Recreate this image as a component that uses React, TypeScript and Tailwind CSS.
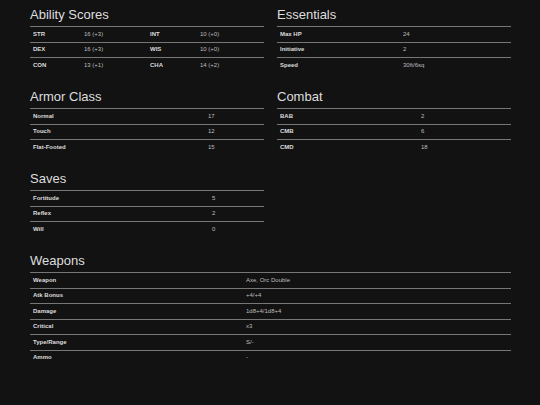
const abilities = [
  ['STR', '16 (+3)', 'INT', '10 (+0)'],
  ['DEX', '16 (+3)', 'WIS', '10 (+0)'],
  ['CON', '13 (+1)', 'CHA', '14 (+2)'],
];

const essentials = [
  ['Max HP', '24'],
  ['Initiative', '2'],
  ['Speed', '30ft/6sq'],
];

const armor = [
  ['Normal', '17'],
  ['Touch', '12'],
  ['Flat-Footed', '15'],
];

const combat = [
  ['BAB', '2'],
  ['CMB', '6'],
  ['CMD', '18'],
];

const saves = [
  ['Fortitude', '5'],
  ['Reflex', '2'],
  ['Will', '0'],
];

const weapons = [
  ['Weapon', 'Axe, Orc Double'],
  ['Atk Bonus', '+4/+4'],
  ['Damage', '1d8+4/1d8+4'],
  ['Critical', 'x3'],
  ['Type/Range', 'S/-'],
  ['Ammo', '-'],
];

const Heading = ({ title }: { title: string }) => (
  <h2 className="text-[13px] leading-[16px] mb-[3px] text-[#dedede] font-normal">{title}</h2>
);

// two-column key/value table, labelWidth = width of first column
const KeyValue = ({ title, rows, labelWidth }: { title: string; rows: string[][]; labelWidth: string }) => (
  <section>
    <Heading title={title} />
    <div>
      {rows.map(([label, value]) => (
        <div key={label} className={`grid ${labelWidth} items-center h-[15.5px] border-t border-[#767676] text-[6px]`}>
          <span className="pl-[3px] font-bold text-[#dcdcdc]">{label}</span>
          <span className="text-[#bdbdbd]">{value}</span>
        </div>
      ))}
    </div>
  </section>
);

export default function App() {
  return (
    <div className="min-h-[405px] w-[540px] bg-[#121212] px-[30px] pt-[7px] font-['Liberation_Sans',Arial,sans-serif]">
      <div className="grid grid-cols-[234px_234px] gap-x-[13px] gap-y-[16.5px]">
        <section>
          <Heading title="Ability Scores" />
          <div>
            {abilities.map(([a, av, b, bv]) => (
              <div key={a} className="grid grid-cols-[54px_66px_50px_1fr] items-center h-[15.5px] border-t border-[#767676] text-[6px]">
                <span className="pl-[3px] font-bold text-[#dcdcdc]">{a}</span>
                <span className="text-[#bdbdbd]">{av}</span>
                <span className="font-bold text-[#dcdcdc]">{b}</span>
                <span className="text-[#bdbdbd]">{bv}</span>
              </div>
            ))}
          </div>
        </section>
        <KeyValue title="Essentials" rows={essentials} labelWidth="grid-cols-[126px_1fr]" />
        <KeyValue title="Armor Class" rows={armor} labelWidth="grid-cols-[178px_1fr]" />
        <KeyValue title="Combat" rows={combat} labelWidth="grid-cols-[144px_1fr]" />
        <KeyValue title="Saves" rows={saves} labelWidth="grid-cols-[182px_1fr]" />
        <div />
        <div className="col-span-2">
          <KeyValue title="Weapons" rows={weapons} labelWidth="grid-cols-[216px_1fr]" />
        </div>
      </div>
    </div>
  );
}
